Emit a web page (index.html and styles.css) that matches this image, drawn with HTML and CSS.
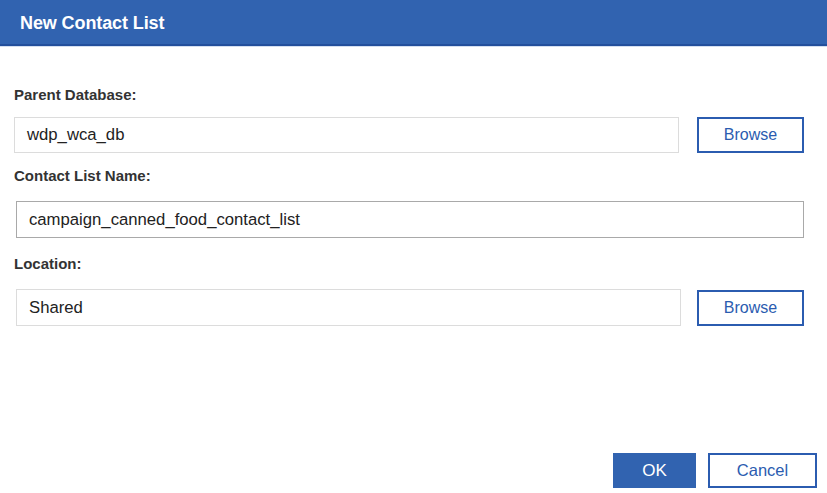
FILE: index.html
```html
<!DOCTYPE html>
<html>
<head>
<meta charset="utf-8">
<link rel="stylesheet" href="styles.css">
</head>
<body>
<div class="dialog">
  <div class="header">New Contact List</div>
  <div class="body">
    <div class="label first">Parent Database:</div>
    <div class="row row-db">
      <div class="field light">wdp_wca_db</div>
      <div class="btn">Browse</div>
    </div>
    <div class="label l2">Contact List Name:</div>
    <div class="row row-name">
      <div class="field dark wide">campaign_canned_food_contact_list</div>
    </div>
    <div class="label l3">Location:</div>
    <div class="row row-loc">
      <div class="field light">Shared</div>
      <div class="btn">Browse</div>
    </div>
  </div>
  <div class="footer">
    <div class="btn primary">OK</div>
    <div class="btn cancel">Cancel</div>
  </div>
</div>
</body>
</html>
```
FILE: styles.css
```css
* { box-sizing: border-box; }
html, body { margin: 0; padding: 0; background: #fff; }
body { font-family: "Liberation Sans", Arial, sans-serif; color: #333; }
.dialog { width: 827px; height: 493px; display: flex; flex-direction: column; }
.header {
  height: 46px;
  background: #3163b0;
  border-bottom: 2px solid #234f9c;
  box-shadow: 0 1px 0 #d4dff0;
  color: #fff;
  font-weight: bold;
  font-size: 18px;
  padding: 13px 0 0 20px;
  letter-spacing: -0.1px;
}
.body { flex: 1; padding: 0 23px 0 14px; }
.label { font-size: 15px; font-weight: bold; color: #333; line-height: 17px; height: 17px; }
.label.first { margin-top: 40px; }
.label.l2 { margin-top: 14px; }
.label.l3 { margin-top: 17px; }
.row { display: flex; align-items: center; margin-top: 14px; }
.row-name, .row-loc { padding-left: 2px; margin-top: 17px; }
.field {
  flex: 1;
  height: 36px;
  font-size: 16.7px;
  color: #222;
  padding: 0 12px;
  display: flex;
  align-items: center;
}
.field.light { border: 1px solid #dcdcdc; }
.field.dark { border: 1px solid #a9a9a9; height: 37px; }
.row-loc .field { height: 37px; }
.row-db .field { margin-right: 18px; }
.row-loc .field { margin-right: 16px; }
.btn {
  width: 107px;
  height: 36px;
  border: 2px solid #2b5cb0;
  color: #2b5cb0;
  font-size: 16px;
  display: flex;
  align-items: center;
  justify-content: center;
}
.footer { display: flex; justify-content: flex-end; gap: 12px; padding: 0 10px 5px 0; }
.btn.primary { width: 83px; height: 35px; background: #3163b0; border-color: #3163b0; color: #fff; font-size: 17px; }
.btn.cancel { width: 109px; height: 35px; font-size: 16.5px; color: #2b5cb0; }
```
